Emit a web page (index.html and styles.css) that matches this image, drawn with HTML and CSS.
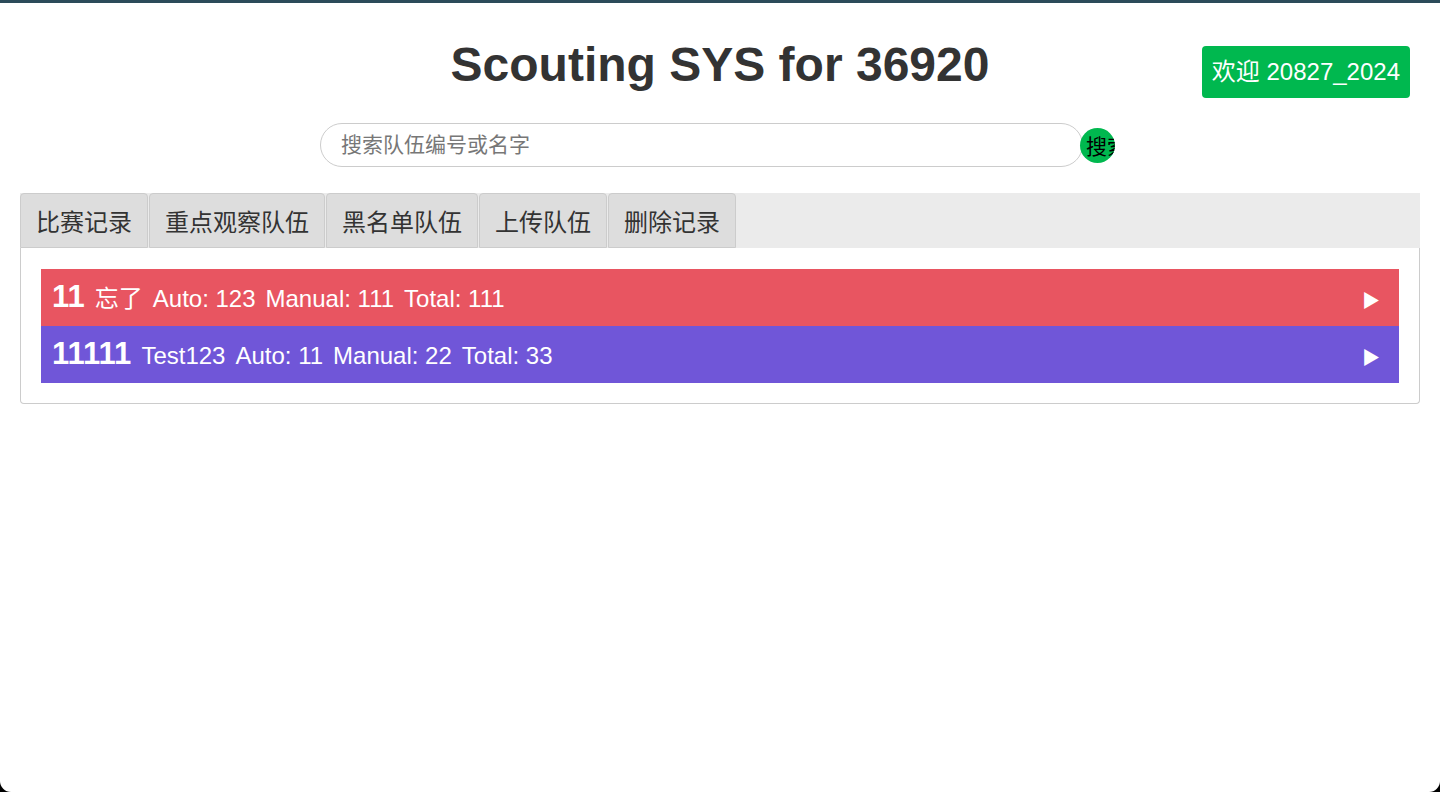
FILE: index.html
```html
<!DOCTYPE html>
<html lang="zh">
<head>
<meta charset="utf-8">
<title>Scouting SYS</title>
<link rel="stylesheet" href="styles.css">
</head>
<body>
<div class="page">
  <header class="header">
    <div class="spacer"></div>
    <h1 class="title">Scouting SYS for 36920</h1>
    <div class="welcome">欢迎 20827_2024</div>
  </header>
  <div class="search">
    <input class="search-input" type="text" placeholder="搜索队伍编号或名字">
    <button class="search-btn">搜索</button>
  </div>
  <div class="tabs">
    <div class="tab">比赛记录</div>
    <div class="tab">重点观察队伍</div>
    <div class="tab">黑名单队伍</div>
    <div class="tab">上传队伍</div>
    <div class="tab">删除记录</div>
  </div>
  <div class="panel">
    <div class="row row-red">
      <span class="num">11</span>
      <span>忘了</span>
      <span>Auto: 123</span>
      <span>Manual: 111</span>
      <span>Total: 111</span>
      <span class="arrow">▶</span>
    </div>
    <div class="row row-purple">
      <span class="num">11111</span>
      <span>Test123</span>
      <span>Auto: 11</span>
      <span>Manual: 22</span>
      <span>Total: 33</span>
      <span class="arrow">▶</span>
    </div>
  </div>
</div>
</body>
</html>
```

FILE: styles.css
```css
html {
  background: #000;
  margin: 0;
  height: 100%;
}
body {
  margin: 0;
  height: 100%;
  box-sizing: border-box;
  background: #fff;
  border-top: 3px solid #2c4b5a;
  border-radius: 0 0 11px 11px;
  overflow: hidden;
  font-family: "Liberation Sans", Arial, "Noto Sans CJK SC", sans-serif;
  color: #333;
}
.page {
  padding: 34px 20px 0;
}
.header {
  display: grid;
  grid-template-columns: 1fr auto 1fr;
  align-items: start;
}
.title {
  margin: 0;
  font-size: 48px;
  line-height: 55px;
  font-weight: bold;
  color: #333;
  text-align: center;
}
.welcome {
  justify-self: end;
  margin-top: 9px;
  margin-right: 10px;
  height: 52px;
  line-height: 52px;
  padding: 0 10px;
  background: #00b84f;
  color: #fff;
  border-radius: 4px;
  font-size: 24px;
  white-space: nowrap;
}
.search {
  display: flex;
  justify-content: center;
  align-items: center;
  margin-top: 25px;
  padding-right: 5px;
}
.search-input {
  width: 763px;
  height: 44px;
  box-sizing: border-box;
  border: 1px solid #ccc;
  border-radius: 22px;
  padding: 0 20px;
  font-size: 21px;
  font-family: "Liberation Sans", Arial, "Noto Sans CJK SC", sans-serif;
  color: #333;
  outline: none;
}
.search-input::placeholder {
  color: #777;
}
.search-btn {
  width: 35px;
  height: 35px;
  margin-left: -3px;
  border: none;
  border-radius: 50%;
  background: #00b84f;
  color: #000;
  font-size: 21px;
  font-family: "Liberation Sans", "Noto Sans CJK SC", sans-serif;
  padding: 0 0 0 6px;
  overflow: hidden;
  white-space: nowrap;
  text-align: left;
}
.tabs {
  display: flex;
  margin-top: 26px;
  background: #ebebeb;
  height: 55px;
  gap: 1px;
}
.tab {
  box-sizing: border-box;
  height: 55px;
  padding: 0 15px;
  line-height: 53px;
  background: #dddddd;
  border: 1px solid #cccccc;
  border-radius: 4px 4px 0 0;
  font-size: 24px;
  color: #333;
  font-family: "Noto Sans CJK SC", sans-serif;
}
.panel {
  border: 1px solid #ccc;
  border-top: none;
  border-radius: 0 0 4px 4px;
  padding: 21px 20px 20px;
}
.row {
  display: flex;
  align-items: baseline;
  height: 57px;
  line-height: 55px;
  padding: 0 19px 0 11px;
  gap: 10px;
  color: #fff;
  font-size: 24px;
  overflow: hidden;
}
.row-red {
  background: #e85561;
}
.row-purple {
  background: #7056d8;
}
.num {
  font-weight: bold;
  font-size: 31px;
}
.arrow {
  margin-left: auto;
  font-size: 18px;
}
```
